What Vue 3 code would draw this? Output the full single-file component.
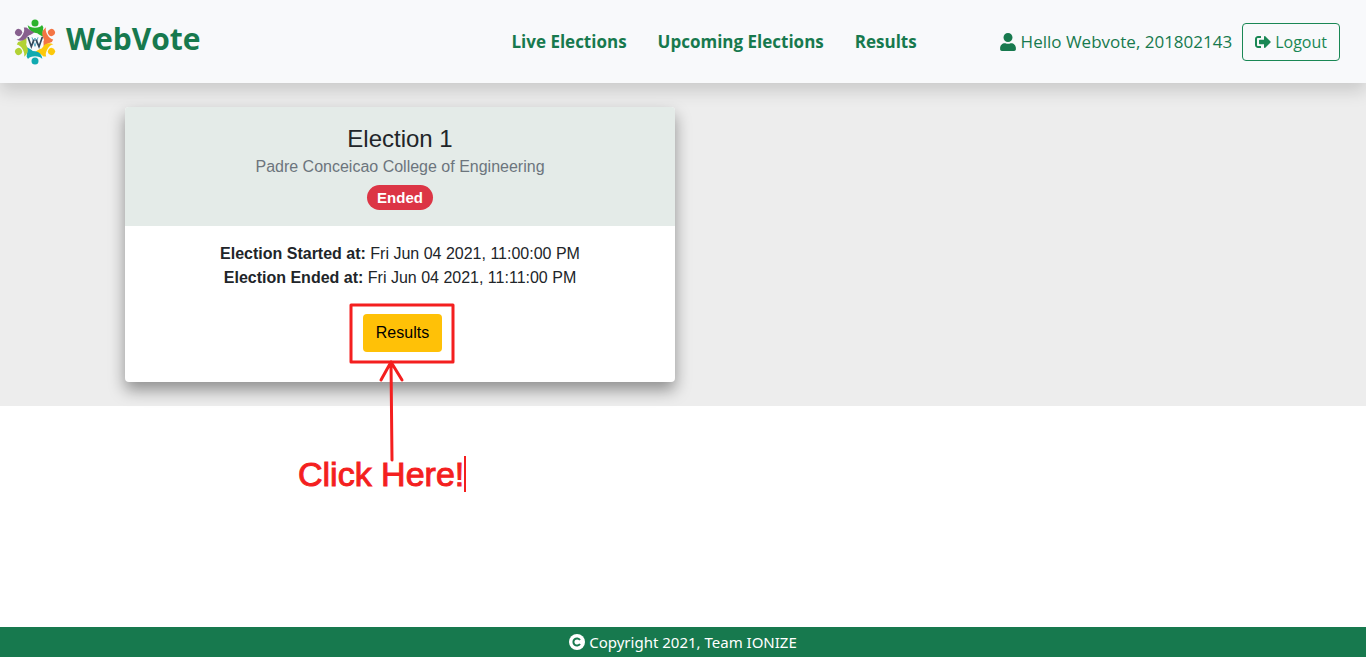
<script setup>
const links = ['Live Elections', 'Upcoming Elections', 'Results']
const members = [
  { color: '#2cb22c', turn: 0 },
  { color: '#f47544', turn: 60 },
  { color: '#fcc90a', turn: 120 },
  { color: '#10aab0', turn: 180 },
  { color: '#b2d235', turn: 240 },
  { color: '#87608e', turn: 300 }
]
</script>

<template>
  <div class="page">
    <header class="navbar">
      <a class="brand" href="#">
        <svg class="logo" viewBox="24 22 124 138" aria-hidden="true">
          <g v-for="m in members" :key="m.turn" :fill="m.color" :transform="`rotate(${m.turn} 86 91)`">
            <circle cx="86" cy="34" r="10.5" />
            <path d="M64 40Q71 48 86 48Q101 48 107 40L111 47Q108 58 110 75L97 68Q95 63 85 63Q67 61 64 40Z" />
          </g>
          <g fill="none" stroke-linejoin="miter">
            <path d="M77 77L86 104L95 77M77 99L86 79L95 99" stroke="#58a9c4" stroke-width="3" />
            <path d="M65 76L75 105L83 84M89 84L98 105L108 76" stroke="#34485a" stroke-width="5" />
          </g>
        </svg>
        <span>WebVote</span>
      </a>
      <nav class="links">
        <a v-for="link in links" :key="link" href="#">{{ link }}</a>
      </nav>
      <div class="account">
        <svg class="user-icon" viewBox="0 0 448 512" aria-hidden="true">
          <path fill="currentColor" d="M224 256c70.7 0 128-57.3 128-128S294.7 0 224 0 96 57.3 96 128s57.3 128 128 128zm89.6 32h-16.7c-22.2 10.2-46.9 16-72.9 16s-50.6-5.8-72.9-16h-16.7C60.2 288 0 348.2 0 422.4V464c0 26.5 21.5 48 48 48h352c26.5 0 48-21.5 48-48v-41.6c0-74.2-60.2-134.4-134.4-134.4z" />
        </svg>
        <span class="hello">Hello Webvote, 201802143</span>
        <button class="logout" type="button">
          <svg viewBox="0 0 512 512" aria-hidden="true">
            <path fill="currentColor" d="M497 273L329 441c-15 15-41 4.5-41-17v-96H152c-13.3 0-24-10.7-24-24v-96c0-13.3 10.7-24 24-24h136V88c0-21.4 25.9-32 41-17l168 168c9.3 9.4 9.3 24.6 0 34zM192 436v-40c0-6.6-5.4-12-12-12H96c-17.7 0-32-14.3-32-32V160c0-17.7 14.3-32 32-32h84c6.6 0 12-5.4 12-12V76c0-6.6-5.4-12-12-12H96c-53 0-96 43-96 96v192c0 53 43 96 96 96h84c6.6 0 12-5.4 12-12z" />
          </svg>
          Logout
        </button>
      </div>
    </header>

    <main>
      <section class="elections">
        <div class="container">
          <div class="slot">
            <article class="card">
              <div class="card-header">
                <h1>Election 1</h1>
                <p>Padre Conceicao College of Engineering</p>
                <span class="badge">Ended</span>
              </div>
              <div class="card-body">
                <p><b>Election Started at:</b> Fri Jun 04 2021, 11:00:00 PM</p>
                <p><b>Election Ended at:</b> Fri Jun 04 2021, 11:11:00 PM</p>
                <button class="results" type="button">Results</button>
              </div>
            </article>
            <div class="note">
              <svg viewBox="0 0 180 160" aria-hidden="true">
                <g fill="none" stroke="#f41f1f" stroke-width="3" stroke-linecap="round" stroke-linejoin="round">
                  <path d="M55 3H157V60H55Z" />
                  <path d="M96 158L95 60M85 78L95 60L106 78" />
                </g>
              </svg>
              <span class="note-text">Click Here!</span>
            </div>
          </div>
        </div>
      </section>
    </main>

    <footer class="footer">
      <svg viewBox="0 0 16 16" aria-hidden="true">
        <circle cx="8" cy="8" r="8" fill="#fff" />
        <path d="M11 10A3.6 3.6 0 1 1 11 6" fill="none" stroke="#17794e" stroke-width="2" />
      </svg>
      <span>Copyright 2021, Team IONIZE</span>
    </footer>
  </div>
</template>

<style>
body {
  margin: 0;
  background: #fff;
}
</style>

<style scoped>
.page {
  min-height: 100vh;
  display: flex;
  flex-direction: column;
  font-family: "Liberation Sans", Arial, sans-serif;
  font-size: 16px;
  line-height: 24px;
  color: #212529;
}
.navbar {
  position: relative;
  z-index: 1;
  display: flex;
  align-items: center;
  box-sizing: border-box;
  min-height: 83px;
  padding: 0 26px 0 14px;
  background: #f8f9fb;
  box-shadow: 0 8px 16px rgba(0, 0, 0, 0.15);
  color: #17794e;
  font-family: "Open Sans", "Noto Sans", sans-serif;
}
a {
  color: inherit;
  text-decoration: none;
}
.brand {
  display: flex;
  align-items: center;
  gap: 10px;
  font-size: 30px;
  line-height: 40px;
  font-weight: 700;
}
.brand span {
  padding-bottom: 6px;
}
.logo {
  width: 42px;
  height: 46px;
}
.links {
  flex: 1;
  display: flex;
  justify-content: center;
  gap: 31px;
  padding-left: 228px;
  font-size: 17px;
  font-weight: 700;
  white-space: nowrap;
}
.account {
  display: flex;
  align-items: center;
  white-space: nowrap;
}
.user-icon {
  width: 16px;
  height: 18px;
  margin-right: 5px;
}
.hello {
  font-size: 17px;
  margin-right: 10px;
}
button {
  font: inherit;
  cursor: pointer;
  border-radius: 4px;
  padding: 6px 12px;
}
.logout {
  display: flex;
  align-items: center;
  gap: 4px;
  border: 1px solid #198754;
  background: transparent;
  color: #198754;
}
.logout svg {
  width: 16px;
  height: 16px;
}
main {
  flex: 1;
}
.elections {
  background: #ededed;
  padding: 24px 0;
}
.container {
  box-sizing: border-box;
  max-width: 1140px;
  margin: 0 auto;
  padding: 0 12px;
}
.slot {
  position: relative;
  max-width: 550px;
}
.card {
  border-radius: 4px;
  background: #fff;
  box-shadow: 0 8px 16px rgba(0, 0, 0, 0.4);
  text-align: center;
}
.card-header {
  padding: 16px;
  border-radius: 4px 4px 0 0;
  background: #e4ebe8;
}
h1 {
  margin: 0;
  font-size: 24px;
  line-height: 32px;
  font-weight: 400;
}
p {
  margin: 0;
}
.card-header p {
  color: #6c757d;
}
.badge {
  display: block;
  width: max-content;
  margin: 6px auto 0;
  padding: 0 10px;
  border-radius: 13px;
  background: #dc3545;
  color: #fff;
  font-size: 15px;
  line-height: 25px;
  font-weight: 700;
}
.card-body {
  padding: 16px 16px 30px;
}
.results {
  margin: 24px 0 0 5px;
  padding: 7px 13px;
  display: inline-block;
  vertical-align: top;
  border: 0;
  background: #ffc107;
  color: #000;
}
.note {
  position: absolute;
  top: 195px;
  left: 50%;
  width: 180px;
  margin-left: -104px;
  color: #f41f1f;
}
.note svg {
  display: block;
  width: 180px;
  height: 160px;
}
.note-text {
  position: absolute;
  top: 154px;
  left: 2px;
  border-right: 2px solid currentColor;
  font-size: 34px;
  line-height: 36px;
  white-space: nowrap;
  -webkit-text-stroke: 1px currentColor;
}
.footer {
  display: flex;
  align-items: center;
  justify-content: center;
  gap: 4px;
  min-height: 30px;
  background: #17794e;
  color: #fff;
  font-family: "Noto Sans", "Open Sans", sans-serif;
  font-size: 15px;
}
.footer svg {
  width: 16px;
  height: 16px;
}
</style>
